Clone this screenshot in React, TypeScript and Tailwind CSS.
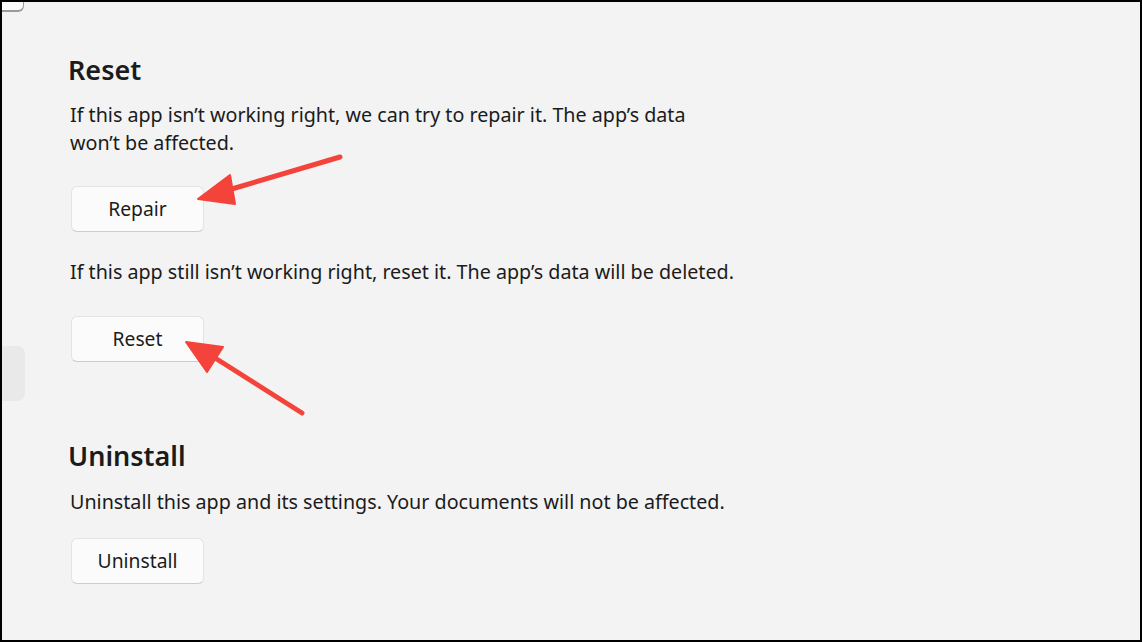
export default function App() {
  const font = { fontFamily: '"Segoe UI", "Noto Sans", "Open Sans", sans-serif' };
  return (
    <div
      className="relative w-[1142px] h-[642px] overflow-hidden border-2 border-black bg-[#f3f3f3] text-[#1b1b1b]"
      style={font}
    >
      {/* cut-off controls at the left edge */}
      <div className="absolute left-0 top-0 w-[22px] h-[10px] rounded-br-[6px] bg-[#fbfbfb] border-b-2 border-r border-[#9a9a9a]" />
      <div className="absolute left-0 top-[344px] w-[23px] h-[55px] rounded-r-[8px] bg-[#e9e9e9]" />

      <div className="flex flex-col items-start pl-[66px] pt-[50px]">
        <h2 className="text-[27px] leading-[36px] font-semibold">Reset</h2>
        <p className="mt-[13px] ml-[2px] text-[19.7px] leading-[28px]">
          If this app isn’t working right, we can try to repair it. The app’s data
          <br />
          won’t be affected.
        </p>
        <button className="mt-[29px] ml-[3px] w-[133px] h-[46px] rounded-[6px] bg-[#fbfbfb] border border-[#e3e3e3] border-b-[#cccccc] text-[19.3px]">
          Repair
        </button>
        <p className="mt-[26px] ml-[2px] text-[19.7px] leading-[28px]">
          If this app still isn’t working right, reset it. The app’s data will be deleted.
        </p>
        <button className="mt-[30px] ml-[3px] w-[133px] h-[46px] rounded-[6px] bg-[#fbfbfb] border border-[#e3e3e3] border-b-[#cccccc] text-[19.3px]">
          Reset
        </button>
        <h2 className="mt-[76px] text-[27px] leading-[36px] font-semibold">Uninstall</h2>
        <p className="mt-[14px] ml-[2px] text-[19.7px] leading-[28px]">
          Uninstall this app and its settings. Your documents will not be affected.
        </p>
        <button className="mt-[22px] ml-[3px] w-[133px] h-[46px] rounded-[6px] bg-[#fbfbfb] border border-[#e3e3e3] border-b-[#cccccc] text-[19.3px]">
          Uninstall
        </button>
      </div>

      {/* annotation arrows */}
      <svg className="absolute left-[-2px] top-[-2px] pointer-events-none" width="1142" height="642">
        <g fill="#f4433a" stroke="#f4433a" strokeLinecap="round" strokeLinejoin="round">
          <line x1="340" y1="157" x2="225" y2="191" strokeWidth="5" />
          <polygon points="198,199 230,175 235,204" strokeWidth="2" />
          <line x1="302" y1="413" x2="212" y2="356" strokeWidth="5" />
          <polygon points="186,342 223,347 207,372" strokeWidth="2" />
        </g>
      </svg>
    </div>
  );
}
